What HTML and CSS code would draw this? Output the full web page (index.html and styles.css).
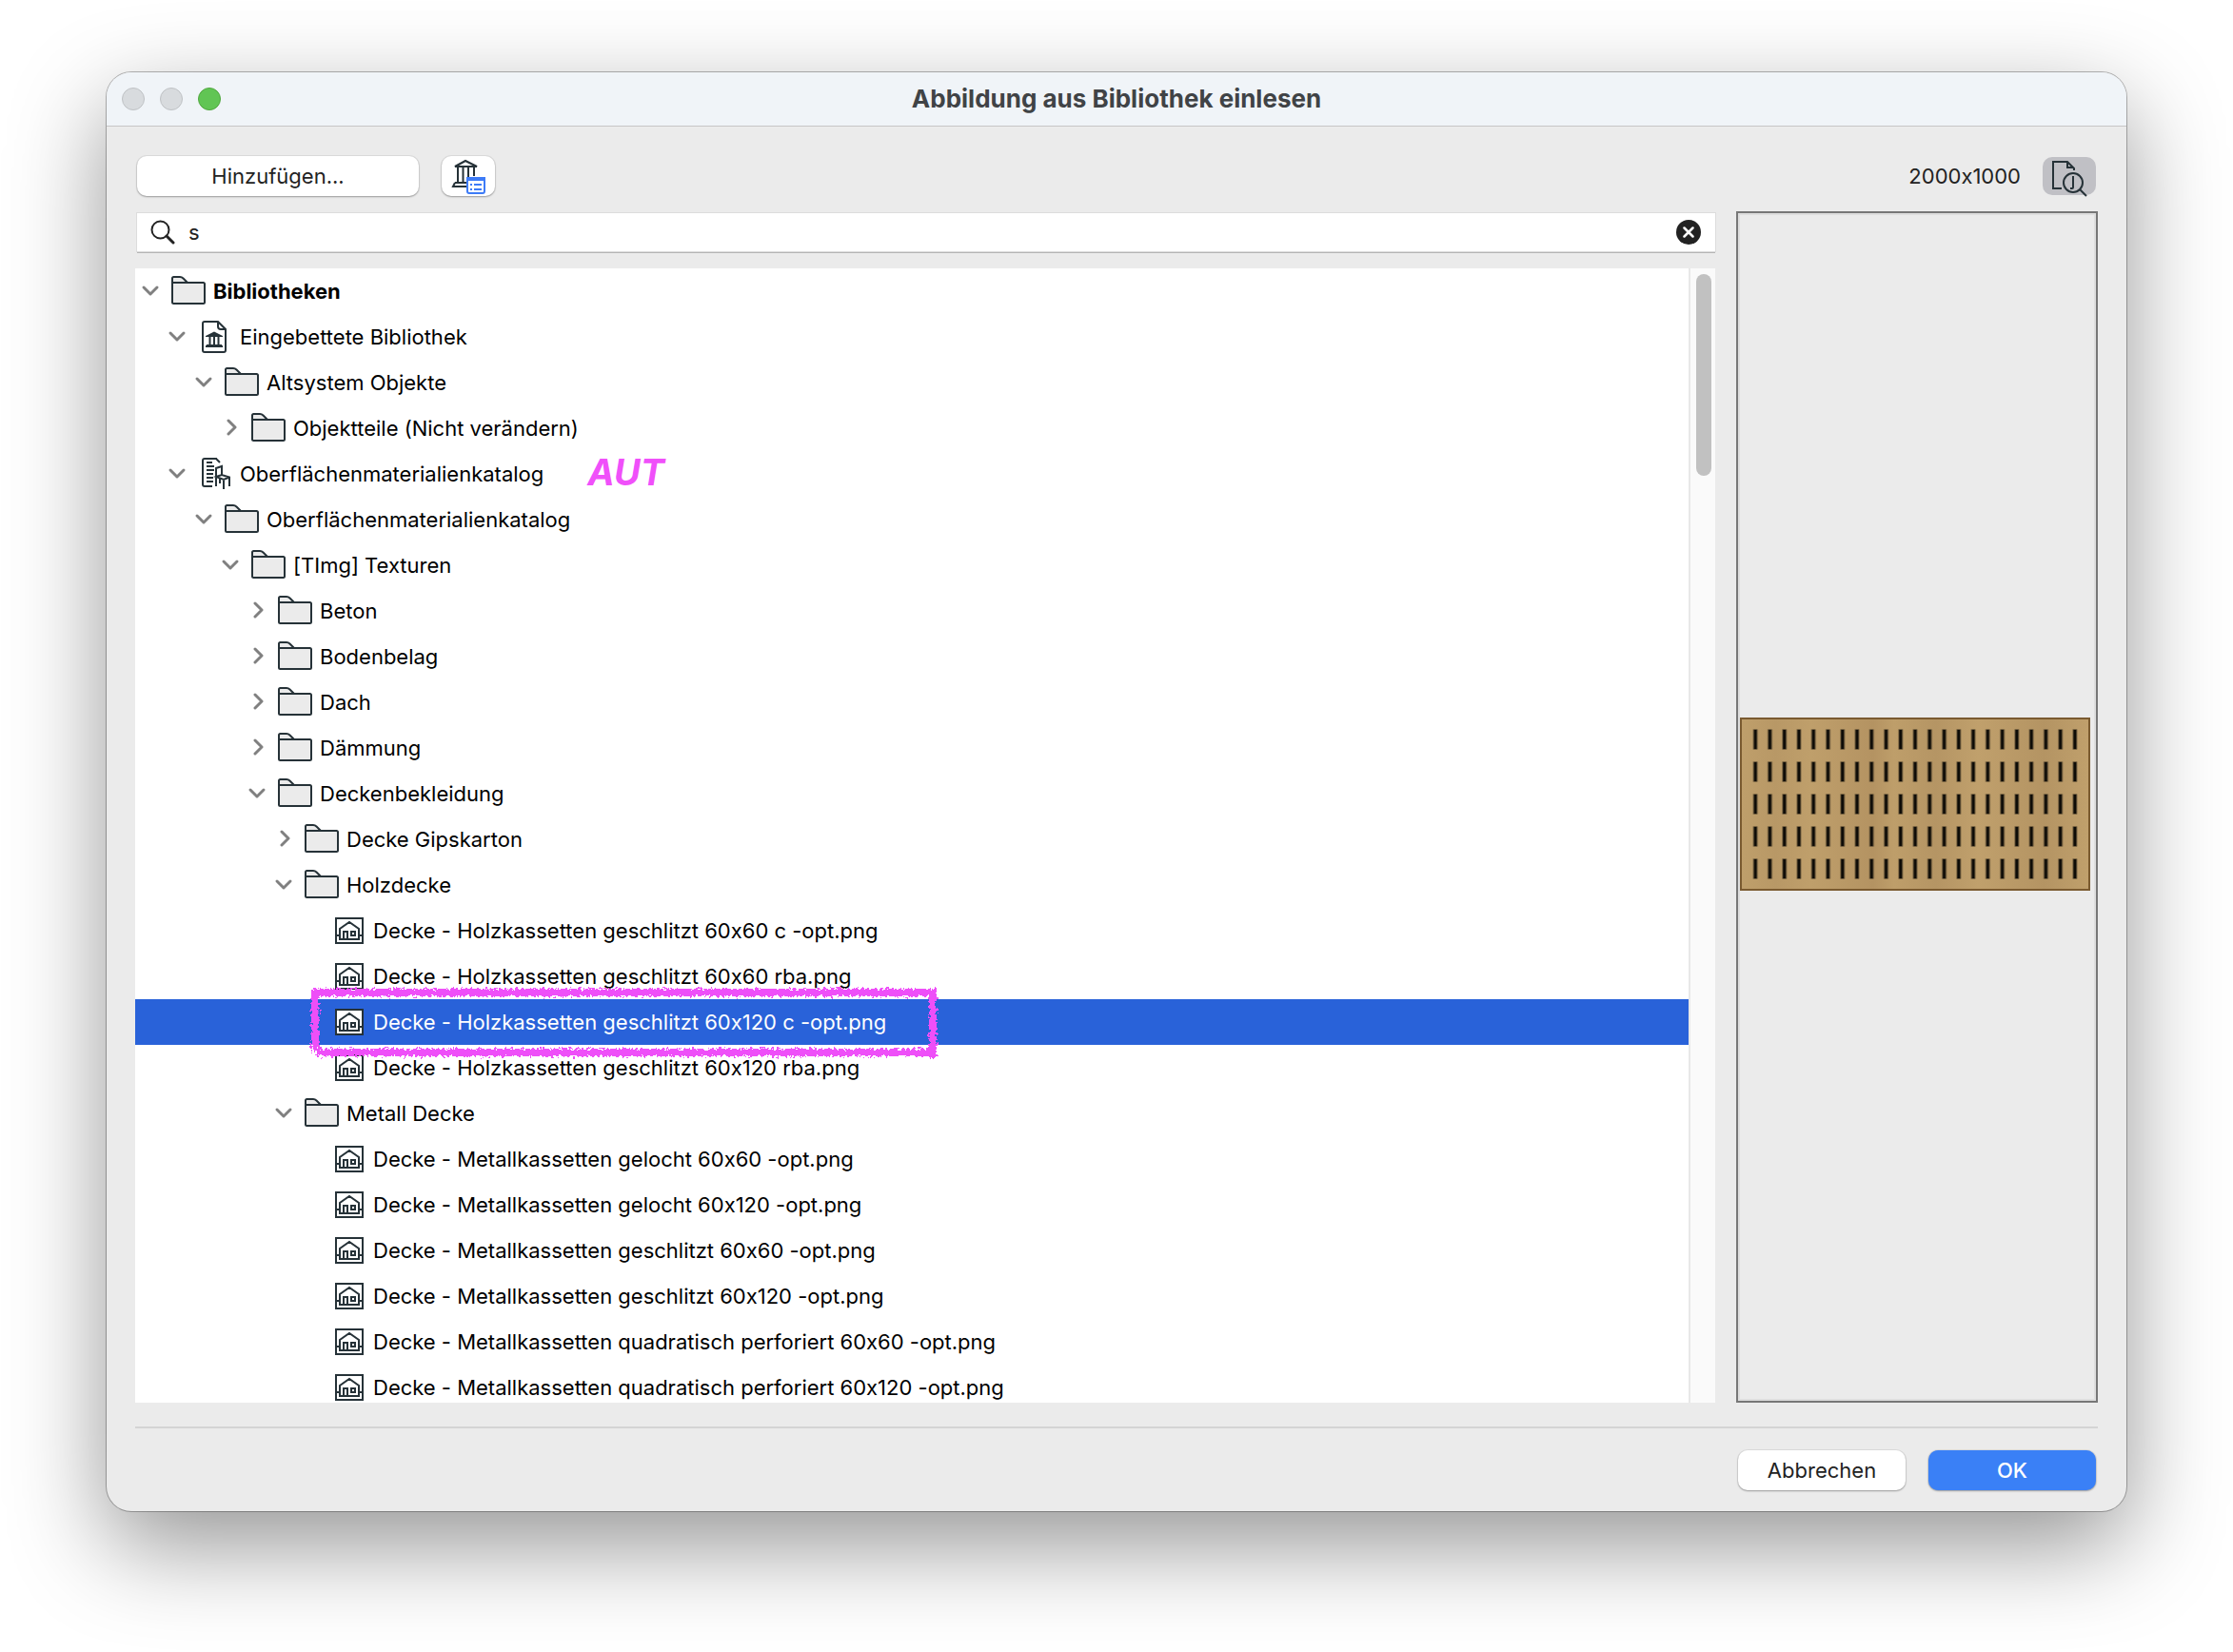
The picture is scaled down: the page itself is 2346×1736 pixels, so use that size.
FILE: index.html
```html
<!DOCTYPE html>
<html lang="de">
<head>
  <meta charset="UTF-8" />
  <meta name="viewport" content="width=device-width, initial-scale=1.0" />
  <title>Abbildung aus Bibliothek einlesen</title>
  <link rel="stylesheet" href="styles.css">
</head>
<body>
  <!-- shared icons -->
  <svg class="sprite" aria-hidden="true">
    <symbol id="down" viewBox="0 0 20 20">
      <path d="M3 6l7 7 7-7" fill="none" stroke="#808080" stroke-width="3" stroke-linecap="round" stroke-linejoin="round"/>
    </symbol>
    <symbol id="right" viewBox="0 0 20 20">
      <path d="M8 2l7 7-7 7" fill="none" stroke="#808080" stroke-width="3" stroke-linecap="round" stroke-linejoin="round"/>
    </symbol>
    <symbol id="folder" viewBox="0 0 36 32">
      <path d="M1 7V2.500Q1 1 2.500 1H9q2 0 3.500 1.500L17 7h16.500Q35 7 35 8.500v19q0 1.500-1.500 1.500h-31Q1 29 1 27.500zM1 7h16" fill="#ebebeb" stroke="#263238" stroke-width="2"/>
    </symbol>
    <symbol id="embedded" viewBox="0 0 26 34">
      <path d="M3 1h14l8 8v22q0 2-2 2H3q-2 0-2-2V3q0-2 2-2zM17 1v5q0 3 3 3h5" fill="#fff" stroke="#263238" stroke-width="2"/>
      <path d="M4 16l9-4.500 9 4.500v1H4zM5 25h16v1h1v2H4v-2h1z" fill="#263238"/>
      <path d="M8.500 17v8M13 17v8M17.500 17v8" stroke="#263238" stroke-width="2"/>
    </symbol>
    <symbol id="catalog" viewBox="0 0 30 34">
      <path d="M11 30H3q-2 0-2-2V3q0-2 2-2h13M15 1l4 4" fill="none" stroke="#263238" stroke-width="2"/>
      <path d="M5 5h6M5 9h8M5 13h8M5 17h7M5 21h7M5 25h7" stroke="#263238" stroke-width="2"/>
      <path d="M15 30V11l6-2v9M15 20l6-2 8 2.500-6 2.500zM23 23v10M29 20v10M19 22v5" fill="none" stroke="#263238" stroke-width="2"/>
    </symbol>
    <symbol id="picture" viewBox="0 0 30 28">
      <path d="M1 1h28v26H1z" fill="#fff" stroke="#263238" stroke-width="2"/>
      <path d="M1 19h4M25 19h4M5 23V12L15 5l10 7v11zM9 23v-8h4v8M17 15h4v4h-4z" fill="none" stroke="#263238" stroke-width="2"/>
    </symbol>
  </svg>

  <main class="dialog">
    <header class="titlebar">
      <div class="lights">
        <button type="button" class="light" aria-label="Schließen"></button>
        <button type="button" class="light" aria-label="Minimieren"></button>
        <button type="button" class="light zoom" aria-label="Zoomen"></button>
      </div>
      <h1>Abbildung aus Bibliothek einlesen</h1>
    </header>

    <div class="content">
      <div class="toolbar">
        <button type="button" class="btn add">Hinzufügen...</button>
        <button type="button" class="btn icon-btn" aria-label="Bibliotheken-Manager">
          <svg width="37" height="38" viewBox="0 0 37 38">
            <path d="M5 9L16 3l12 6zM8 10v16M13.500 10v16M19 10v16M25 10v9M5 26h13M5 26l-2 4h15" fill="none" stroke="#263238" stroke-width="2"/>
            <rect x="18" y="21" width="18" height="16" rx="2" fill="#fff" stroke="#3d7bf7" stroke-width="2"/>
            <path d="M17 22h20" stroke="#3d7bf7" stroke-width="4"/>
            <path d="M21 28h2M25 28h8M21 33h2M25 33h8" stroke="#3d7bf7" stroke-width="2"/>
          </svg>
        </button>
      </div>

      <div class="image-info">
        <span>2000x1000</span>
        <button type="button" class="preview-toggle" aria-label="Vorschau" aria-pressed="true">
          <svg width="36" height="38" viewBox="0 0 36 38">
            <path d="M10 32H1V4h15l7 7v2M16 4v6h6" fill="none" stroke="#263238" stroke-width="2"/>
            <circle cx="22" cy="26" r="10" fill="none" stroke="#263238" stroke-width="2"/>
            <path d="M22 19v12q0 1-1 1h-2M29 33l7 7" fill="none" stroke="#263238" stroke-width="2"/>
          </svg>
        </button>
      </div>

      <section class="browser">
        <div class="search">
          <label for="query" aria-label="Suchen">
            <svg width="26" height="26" viewBox="0 0 26 26">
              <circle cx="10.500" cy="10.500" r="9" fill="none" stroke="#222" stroke-width="2"/>
              <path d="M17 17l7 7" stroke="#222" stroke-width="3" stroke-linecap="round"/>
            </svg>
          </label>
          <input type="text" id="query" value="s">
          <button type="button" class="clear" aria-label="Suche löschen">
            <svg width="26" height="26" viewBox="0 0 26 26">
              <circle cx="13" cy="13" r="13" fill="#222"/>
              <path d="M8.500 8.500l9 9M17.500 8.500l-9 9" stroke="#fff" stroke-width="2.500" stroke-linecap="round"/>
            </svg>
          </button>
        </div>

        <div class="tree-box">
          <ul class="tree" role="tree">
            <li class="row level-0 root"><button type="button" aria-label="Zuklappen"><svg><use href="#down"/></svg></button><svg class="folder"><use href="#folder"/></svg>Bibliotheken</li>
            <li class="row level-1"><button type="button" aria-label="Zuklappen"><svg><use href="#down"/></svg></button><svg class="embedded"><use href="#embedded"/></svg>Eingebettete Bibliothek</li>
            <li class="row level-2"><button type="button" aria-label="Zuklappen"><svg><use href="#down"/></svg></button><svg class="folder"><use href="#folder"/></svg>Altsystem Objekte</li>
            <li class="row level-3"><button type="button" aria-label="Aufklappen"><svg><use href="#right"/></svg></button><svg class="folder"><use href="#folder"/></svg>Objektteile (Nicht verändern)</li>
            <li class="row level-1"><button type="button" aria-label="Zuklappen"><svg><use href="#down"/></svg></button><svg class="catalog"><use href="#catalog"/></svg>Oberflächenmaterialienkatalog<span class="note">AUT</span></li>
            <li class="row level-2"><button type="button" aria-label="Zuklappen"><svg><use href="#down"/></svg></button><svg class="folder"><use href="#folder"/></svg>Oberflächenmaterialienkatalog</li>
            <li class="row level-3"><button type="button" aria-label="Zuklappen"><svg><use href="#down"/></svg></button><svg class="folder"><use href="#folder"/></svg>[TImg] Texturen</li>
            <li class="row level-4"><button type="button" aria-label="Aufklappen"><svg><use href="#right"/></svg></button><svg class="folder"><use href="#folder"/></svg>Beton</li>
            <li class="row level-4"><button type="button" aria-label="Aufklappen"><svg><use href="#right"/></svg></button><svg class="folder"><use href="#folder"/></svg>Bodenbelag</li>
            <li class="row level-4"><button type="button" aria-label="Aufklappen"><svg><use href="#right"/></svg></button><svg class="folder"><use href="#folder"/></svg>Dach</li>
            <li class="row level-4"><button type="button" aria-label="Aufklappen"><svg><use href="#right"/></svg></button><svg class="folder"><use href="#folder"/></svg>Dämmung</li>
            <li class="row level-4"><button type="button" aria-label="Zuklappen"><svg><use href="#down"/></svg></button><svg class="folder"><use href="#folder"/></svg>Deckenbekleidung</li>
            <li class="row level-5"><button type="button" aria-label="Aufklappen"><svg><use href="#right"/></svg></button><svg class="folder"><use href="#folder"/></svg>Decke Gipskarton</li>
            <li class="row level-5"><button type="button" aria-label="Zuklappen"><svg><use href="#down"/></svg></button><svg class="folder"><use href="#folder"/></svg>Holzdecke</li>
            <li class="row file"><svg class="picture"><use href="#picture"/></svg>Decke - Holzkassetten geschlitzt 60x60 c -opt.png</li>
            <li class="row file"><svg class="picture"><use href="#picture"/></svg>Decke - Holzkassetten geschlitzt 60x60 rba.png</li>
            <li class="row file selected" aria-selected="true"><svg class="picture"><use href="#picture"/></svg>Decke - Holzkassetten geschlitzt 60x120 c -opt.png
              <svg class="marker" viewBox="0 0 668 84" aria-hidden="true">
                <filter id="crayon" x="-5%" y="-20%" width="110%" height="140%">
                  <feTurbulence type="fractalNoise" baseFrequency="0.35" numOctaves="2" seed="4"/>
                  <feDisplacementMap in="SourceGraphic" scale="8" xChannelSelector="R" yChannelSelector="G"/>
                </filter>
                <path d="M5 9h657M9 5v66M10 72h652M658 6v71" fill="none" stroke="#ee50f8" stroke-width="8" filter="url(#crayon)"/>
              </svg>
            </li>
            <li class="row file"><svg class="picture"><use href="#picture"/></svg>Decke - Holzkassetten geschlitzt 60x120 rba.png</li>
            <li class="row level-5"><button type="button" aria-label="Zuklappen"><svg><use href="#down"/></svg></button><svg class="folder"><use href="#folder"/></svg>Metall Decke</li>
            <li class="row file"><svg class="picture"><use href="#picture"/></svg>Decke - Metallkassetten gelocht 60x60 -opt.png</li>
            <li class="row file"><svg class="picture"><use href="#picture"/></svg>Decke - Metallkassetten gelocht 60x120 -opt.png</li>
            <li class="row file"><svg class="picture"><use href="#picture"/></svg>Decke - Metallkassetten geschlitzt 60x60 -opt.png</li>
            <li class="row file"><svg class="picture"><use href="#picture"/></svg>Decke - Metallkassetten geschlitzt 60x120 -opt.png</li>
            <li class="row file"><svg class="picture"><use href="#picture"/></svg>Decke - Metallkassetten quadratisch perforiert 60x60 -opt.png</li>
            <li class="row file"><svg class="picture"><use href="#picture"/></svg>Decke - Metallkassetten quadratisch perforiert 60x120 -opt.png</li>
          </ul>
          <div class="scrollbar"><div class="thumb"></div></div>
        </div>
      </section>

      <section class="preview" aria-label="Vorschau">
        <svg viewBox="0 0 368 182">
          <defs>
            <linearGradient id="wood">
              <stop offset="0" stop-color="#bf9f6b"/>
              <stop offset="0.100" stop-color="#b89866"/>
              <stop offset="0.200" stop-color="#bf9f6b"/>
              <stop offset="0.380" stop-color="#b49362"/>
              <stop offset="0.440" stop-color="#be9e6a"/>
              <stop offset="0.560" stop-color="#b59564"/>
              <stop offset="0.680" stop-color="#c0a06c"/>
              <stop offset="0.870" stop-color="#b49463"/>
              <stop offset="1" stop-color="#c0a06c"/>
            </linearGradient>
            <pattern id="slots" x="8.700" y="12" width="15.260" height="34" patternUnits="userSpaceOnUse">
              <rect x="5" y="0" width="5" height="22" rx="1" fill="#4a3c26" opacity="0.600"/>
              <rect x="6" y="1" width="3" height="20" fill="#0c0a06"/>
            </pattern>
          </defs>
          <rect x="1" y="1" width="366" height="180" fill="url(#wood)" stroke="#7a5a30" stroke-width="2"/>
          <rect x="8.700" y="12" width="351" height="158" fill="url(#slots)"/>
        </svg>
      </section>
    </div>

    <footer class="actions">
      <button type="button" class="btn">Abbrechen</button>
      <button type="button" class="btn primary">OK</button>
    </footer>
  </main>
</body>
</html>
```
FILE: styles.css
```css
:root {
  --bg: #ebebeb;
  --text: #222222;
  --accent: #3a80f6;
  --selected: #2962d9;
  --marker: #f050fa;
  --radius: 10px;
}

* {
  box-sizing: border-box;
}

body {
  font-family: Inter, 'Helvetica Neue', Arial, sans-serif;
  font-size: 22px;
  font-feature-settings: "calt" 0; /* keep the x in 60x60 a letter */
  margin: 0;
  padding: 76px 112px 148px;
  height: 100vh;
  background: #ffffff;
  color: var(--text);
}

button, input {
  font: inherit;
  color: inherit;
  margin: 0;
  padding: 0;
  border: none;
  background: none;
}

svg {
  display: block;
}

.sprite {
  position: absolute;
  width: 0;
  height: 0;
}

.dialog {
  height: 100%;
  display: flex;
  flex-direction: column;
  background: var(--bg);
  border-radius: 26px;
  box-shadow: 0 0 0 1px rgba(0,0,0,0.28), 0 36px 100px rgba(0,0,0,0.42);
}

.titlebar {
  display: grid;
  grid-template-columns: 1fr auto 1fr;
  align-items: center;
  height: 57px;
  padding: 0 16px;
  background: #f0f4f8;
  border-bottom: 1px solid #c6c6c6;
  border-radius: 26px 26px 0 0;
}

.titlebar h1 {
  margin: 0;
  font-size: 26px;
  font-weight: 700;
  line-height: 32px;
  color: #404346;
}

.lights {
  display: flex;
  gap: 16px;
}

.light {
  width: 24px;
  height: 24px;
  border-radius: 50%;
  background: #d8dbde;
  border: 1px solid #bfc2c5;
}

.light.zoom {
  background: #61c554;
  border-color: #50a73f;
}

.content {
  flex: 1;
  min-height: 0;
  display: grid;
  grid-template-columns: 1fr 380px;
  grid-template-rows: 42px 1fr;
  gap: 16px 22px;
  padding: 31px 30px 0;
}

.toolbar {
  display: flex;
  gap: 24px;
  padding-left: 2px;
}

.btn {
  width: 176px;
  height: 42px;
  border-radius: var(--radius);
  background: #ffffff;
  box-shadow: 0 0 0 1px rgba(0,0,0,0.06), 0 1px 2px rgba(0,0,0,0.3);
}

.btn.add {
  width: 296px;
}

.btn.icon-btn {
  width: 56px;
  padding-left: 9px;
}

.btn.primary {
  background: var(--accent);
  color: #ffffff;
  font-weight: 500;
}

.image-info {
  display: flex;
  align-items: center;
  justify-content: flex-end;
  gap: 23px;
  padding-right: 2px;
}

.preview-toggle {
  width: 56px;
  height: 40px;
  padding-left: 10px;
  border-radius: var(--radius);
  background: #c0c0c5;
}

.preview-toggle svg {
  overflow: visible;
}

.browser {
  min-height: 0;
  display: flex;
  flex-direction: column;
  gap: 18px;
  padding-top: 2px;
}

.search {
  display: flex;
  align-items: center;
  height: 40px;
  margin-left: 2px;
  padding: 0 15px 0 14px;
  background: #ffffff;
  box-shadow: 0 0 0 1px #dcdcdc, 0 2px 0 #b4b4b4;
}

.search input {
  flex: 1;
  height: 40px;
  padding: 0 14px;
  outline: none;
}

.tree-box {
  flex: 1;
  min-height: 0;
  display: flex;
  background: #ffffff;
}

.tree {
  flex: 1;
  margin: 0;
  padding: 0;
  list-style: none;
  overflow: hidden;
  color: #000000;
}

.row {
  position: relative;
  display: flex;
  align-items: center;
  height: 48px;
  padding-left: 6px;
  white-space: nowrap;
}

.row button {
  width: 20px;
  height: 20px;
  margin-right: 12px;
}

.row button svg {
  width: 20px;
  height: 20px;
}

.level-1 { padding-left: 34px; }
.level-2 { padding-left: 62px; }
.level-3 { padding-left: 90px; }
.level-4 { padding-left: 118px; }
.level-5 { padding-left: 146px; }
.file { padding-left: 210px; }

.root {
  font-weight: 700;
}

.folder {
  width: 36px;
  height: 32px;
  margin-right: 8px;
}

.embedded {
  width: 26px;
  height: 34px;
  margin: 0 14px 0 4px;
}

.catalog {
  width: 30px;
  height: 34px;
  margin: 0 10px 0 4px;
}

.picture {
  width: 30px;
  height: 28px;
  margin-right: 10px;
}

.selected {
  background: var(--selected);
  color: #ffffff;
  z-index: 1;
}

/* hand-drawn marks on top of the list */
.note {
  margin-left: 46px;
  padding-bottom: 4px;
  font-size: 38px;
  font-style: italic;
  font-weight: 700;
  color: var(--marker);
}

.marker {
  position: absolute;
  left: 180px;
  top: -16px;
  width: 668px;
  height: 84px;
}

.scrollbar {
  width: 28px;
  padding: 6px;
  background: #fafafa;
  border-left: 2px solid #e8e8e8;
}

.thumb {
  width: 16px;
  height: 212px;
  border-radius: 8px;
  background: #c1c1c1;
}

.preview {
  display: flex;
  align-items: center;
  padding: 0 6px 6px 2px;
  border: 2px solid #777777;
  box-shadow: inset 0 0 0 2px #dedede;
}

.preview svg {
  width: 100%;
}

.actions {
  display: flex;
  justify-content: flex-end;
  gap: 24px;
  margin: 25px 30px 0;
  padding: 23px 2px 22px;
  border-top: 2px solid #d4d4d4;
}
```
